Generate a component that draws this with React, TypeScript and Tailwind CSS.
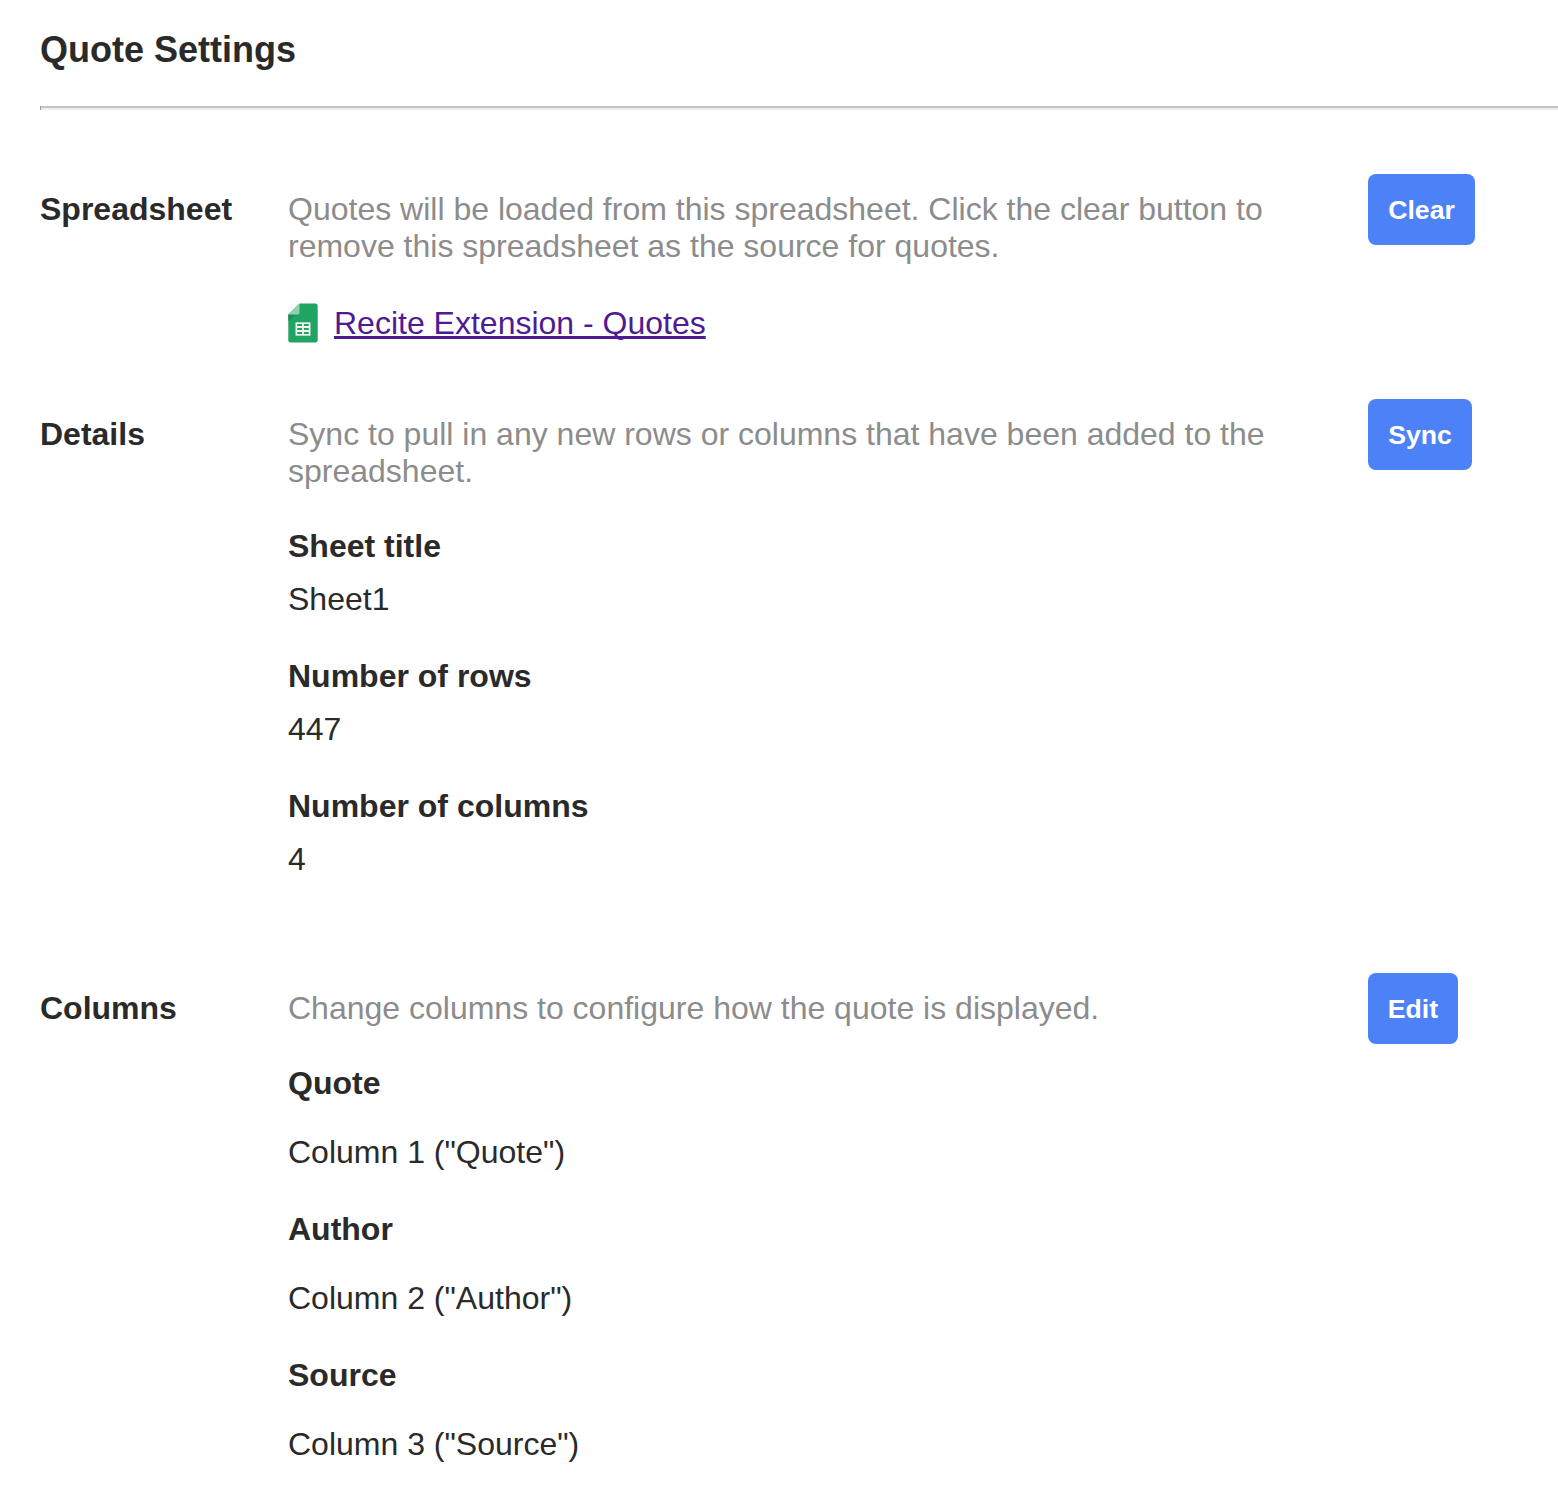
import React from "react";

function Row({ label, text, action, w, className, children }: { label: string; text: React.ReactNode; action: string; w: string; className: string; children: React.ReactNode }) {
  return (
    <section className={`flex items-start ${className}`}>
      <h2 className="w-[248px] shrink-0 pt-[17px] text-[32px] leading-[37px] font-bold">{label}</h2>
      <div className="w-[1080px] shrink-0 pt-[17px] text-[32px] leading-[37px]">
        <p className="whitespace-nowrap text-[#8c8c8c]">{text}</p>
        {children}
      </div>
      <button className={`h-[71px] shrink-0 rounded-[8px] bg-[#4d82f7] text-[26.67px] font-bold text-white ${w}`}>{action}</button>
    </section>
  );
}

function Item({ title, value, className }: { title: string; value: string; className: string }) {
  return (
    <div className={`flex flex-col ${className}`}>
      <h3 className="font-bold">{title}</h3>
      <p>{value}</p>
    </div>
  );
}

export default function App() {
  return (
    <main className="h-[1496px] w-[1558px] overflow-hidden bg-white pl-10 font-['Liberation_Sans',sans-serif] text-[#2a2a2a]">
      <h1 className="pt-[29px] text-[36px] leading-[42px] font-bold">Quote Settings</h1>
      <div className="mt-[35px] flex h-1">
        <div className="w-px bg-[#9a9a9a]" />
        <div className="flex-1 border-t-2 border-b-2 border-t-[#c4c4c4] border-b-[#eeeeee]" />
      </div>
      <Row className="mt-16 h-[225px]" label="Spreadsheet" action="Clear" w="w-[107px]" text={<>Quotes will be loaded from this spreadsheet. Click the clear button to<br />remove this spreadsheet as the source for quotes.</>}>
        <div className="mt-[38px] flex items-center gap-4">
          <svg width="30" height="40" viewBox="0 0 30 40">
            <defs>
              <linearGradient id="fold" x1="0" y1="0" x2="1" y2="1">
                <stop offset="0" stopColor="#17824d" />
                <stop offset="1" stopColor="#20a464" />
              </linearGradient>
            </defs>
            <path d="M11.500 .5H27.500a2.200 2.200 0 0 1 2.200 2.200v34.600a2.200 2.200 0 0 1-2.200 2.200h-25a2.200 2.200 0 0 1-2.200-2.200V11.500z" fill="#20a464" />
            <path d="M.3 11.500H9.500L.3 18z" fill="url(#fold)" />
            <path d="M11.500 .5v8.800a2.200 2.200 0 0 1-2.200 2.200H.3z" fill="#8ed1b1" />
            <path d="M7.500 19.300h15v13.400h-15z" fill="#f1f1f1" />
            <path d="M9.300 21.100h4.800v2h-4.800zm6.600 0h4.800v2h-4.800zm-6.600 3.900h4.800v2h-4.800zm6.600 0h4.800v2h-4.800zM9.300 28.900h4.800v2h-4.800zm6.600 0h4.800v2h-4.800z" fill="#20a464" />
          </svg>
          <a href="#" className="text-[#4f1b92] underline decoration-[3px] underline-offset-[2px] [text-decoration-skip-ink:none]">Recite Extension - Quotes</a>
        </div>
      </Row>
      <Row className="h-[574px]" label="Details" action="Sync" w="w-[104px]" text={<>Sync to pull in any new rows or columns that have been added to the<br />spreadsheet.</>}>
        <div className="mt-[38px] flex flex-col gap-10">
          <Item className="gap-4" title="Sheet title" value="Sheet1" />
          <Item className="gap-4" title="Number of rows" value="447" />
          <Item className="gap-4" title="Number of columns" value="4" />
        </div>
      </Row>
      <Row className="" label="Columns" action="Edit" w="w-[90px]" text="Change columns to configure how the quote is displayed.">
        <div className="mt-[38px] flex flex-col gap-10">
          <Item className="gap-8" title="Quote" value={'Column 1 ("Quote")'} />
          <Item className="gap-8" title="Author" value={'Column 2 ("Author")'} />
          <Item className="gap-8" title="Source" value={'Column 3 ("Source")'} />
        </div>
      </Row>
    </main>
  );
}
